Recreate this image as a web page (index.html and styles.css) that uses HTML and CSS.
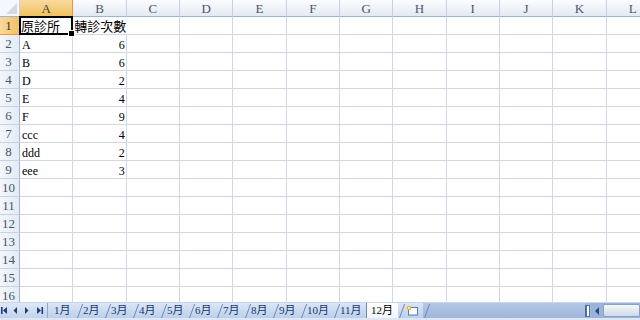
FILE: index.html
```html
<!DOCTYPE html>
<html lang="zh-Hant">

<head>
   <meta charset="utf-8" />
   <title>轉診次數 - 12月</title>
   <link rel="stylesheet" href="styles.css">
</head>

<body>
   <div class="sheet">
      <table class="grid">
         <colgroup>
            <col class="col-head">
            <col span="12" class="col-cell">
         </colgroup>
         <thead>
            <tr>
               <th class="corner"></th>
               <th class="sel">A</th>
               <th>B</th>
               <th>C</th>
               <th>D</th>
               <th>E</th>
               <th>F</th>
               <th>G</th>
               <th>H</th>
               <th>I</th>
               <th>J</th>
               <th>K</th>
               <th>L</th>
            </tr>
         </thead>
         <tbody>
            <tr>
               <th class="sel">1</th>
               <td class="active cjk">原診所</td>
               <td class="cjk" colspan="2">轉診次數</td>
               <td></td><td></td><td></td><td></td><td></td><td></td><td></td><td></td><td></td>
            </tr>
            <tr>
               <th>2</th><td>A</td><td class="num">6</td>
               <td></td><td></td><td></td><td></td><td></td><td></td><td></td><td></td><td></td><td></td>
            </tr>
            <tr>
               <th>3</th><td>B</td><td class="num">6</td>
               <td></td><td></td><td></td><td></td><td></td><td></td><td></td><td></td><td></td><td></td>
            </tr>
            <tr>
               <th>4</th><td>D</td><td class="num">2</td>
               <td></td><td></td><td></td><td></td><td></td><td></td><td></td><td></td><td></td><td></td>
            </tr>
            <tr>
               <th>5</th><td>E</td><td class="num">4</td>
               <td></td><td></td><td></td><td></td><td></td><td></td><td></td><td></td><td></td><td></td>
            </tr>
            <tr>
               <th>6</th><td>F</td><td class="num">9</td>
               <td></td><td></td><td></td><td></td><td></td><td></td><td></td><td></td><td></td><td></td>
            </tr>
            <tr>
               <th>7</th><td>ccc</td><td class="num">4</td>
               <td></td><td></td><td></td><td></td><td></td><td></td><td></td><td></td><td></td><td></td>
            </tr>
            <tr>
               <th>8</th><td>ddd</td><td class="num">2</td>
               <td></td><td></td><td></td><td></td><td></td><td></td><td></td><td></td><td></td><td></td>
            </tr>
            <tr>
               <th>9</th><td>eee</td><td class="num">3</td>
               <td></td><td></td><td></td><td></td><td></td><td></td><td></td><td></td><td></td><td></td>
            </tr>
            <tr>
               <th>10</th>
               <td></td><td></td><td></td><td></td><td></td><td></td><td></td><td></td><td></td><td></td><td></td><td></td>
            </tr>
            <tr>
               <th>11</th>
               <td></td><td></td><td></td><td></td><td></td><td></td><td></td><td></td><td></td><td></td><td></td><td></td>
            </tr>
            <tr>
               <th>12</th>
               <td></td><td></td><td></td><td></td><td></td><td></td><td></td><td></td><td></td><td></td><td></td><td></td>
            </tr>
            <tr>
               <th>13</th>
               <td></td><td></td><td></td><td></td><td></td><td></td><td></td><td></td><td></td><td></td><td></td><td></td>
            </tr>
            <tr>
               <th>14</th>
               <td></td><td></td><td></td><td></td><td></td><td></td><td></td><td></td><td></td><td></td><td></td><td></td>
            </tr>
            <tr>
               <th>15</th>
               <td></td><td></td><td></td><td></td><td></td><td></td><td></td><td></td><td></td><td></td><td></td><td></td>
            </tr>
            <tr>
               <th>16</th>
               <td></td><td></td><td></td><td></td><td></td><td></td><td></td><td></td><td></td><td></td><td></td><td></td>
            </tr>
         </tbody>
      </table>
   </div>

   <div class="tabbar">
      <div class="tabnav">
         <svg width="47" height="15" viewBox="0 0 47 15">
            <rect x="1" y="4" width="1.6" height="7" fill="#1d3f77" />
            <polygon points="7,4 7,11 3,7.5" fill="#1d3f77" />
            <polygon points="17,4 17,11 13.5,7.5" fill="#1d3f77" />
            <polygon points="25,4 25,11 28.5,7.5" fill="#1d3f77" />
            <polygon points="37,4 37,11 41,7.5" fill="#1d3f77" />
            <rect x="41.5" y="4" width="1.6" height="7" fill="#1d3f77" />
         </svg>
      </div>
      <div class="tabs">
         <span class="tab first">1月</span>
         <span class="tab">2月</span>
         <span class="tab">3月</span>
         <span class="tab">4月</span>
         <span class="tab">5月</span>
         <span class="tab">6月</span>
         <span class="tab">7月</span>
         <span class="tab">8月</span>
         <span class="tab">9月</span>
         <span class="tab">10月</span>
         <span class="tab">11月</span>
         <span class="tab current">12月</span>
         <span class="tab newsheet">
            <svg width="13" height="11" viewBox="0 0 13 11">
               <rect x="2.5" y="2.5" width="9" height="7.5" fill="#fff" stroke="#5a7bb0" />
               <circle cx="3" cy="3" r="2.3" fill="#f0b030" />
               <circle cx="3" cy="3" r="1" fill="#fff6c8" />
            </svg>
         </span>
      </div>
      <div class="tray"></div>
      <div class="splitter"></div>
      <div class="hscroll">
         <span class="arrow-left"></span>
         <span class="thumb"></span>
      </div>
   </div>
   <div class="status-edge"></div>
</body>

</html>
```

FILE: styles.css
```css
html {
   margin: 0;
   padding: 0;
}

body {
   margin: 0;
   width: 640px;
   height: 320px;
   overflow: hidden;
   background: #fff;
   font-family: "Liberation Serif", "Noto Sans CJK TC", serif;
}

* {
   box-sizing: border-box
}

.sheet {
   height: 302px;
   overflow: hidden;
}

.grid {
   table-layout: fixed;
   width: 660px;
   border-collapse: separate;
   border-spacing: 0;
   font-size: 12px;
   color: #000;
}

.col-head {
   width: 20px
}

.col-cell {
   width: 53.33px
}

.grid th {
   font-weight: normal;
   color: #4a5568;
   background: linear-gradient(#fbfcfe, #e3e9f3);
   border-right: 1px solid #c5d1e4;
   border-bottom: 1px solid #9eb6ce;
   padding: 0;
   text-align: center;
}

.grid thead th {
   height: 17px;
   line-height: 15px;
   font-size: 13px;
}

.grid tbody th {
   height: 18px;
   font-size: 13px;
   line-height: 16px;
   padding-right: 2px;
   background: linear-gradient(90deg, #f3f6fb, #e4ebf6);
   border-right: 1px solid #9eb6ce;
   border-bottom: 1px solid #c5d1e4;
}

.grid th.corner {
   position: relative;
   background: #f4f7fb;
}

.grid th.corner::after {
   content: "";
   position: absolute;
   right: 2px;
   bottom: 2px;
   border-style: solid;
   border-width: 0 0 11px 11px;
   border-color: transparent transparent #d4dae4 transparent;
}

.grid th.sel {
   color: #3b3b3b;
   background: linear-gradient(#f9d99f, #f1c15f);
   border-color: #f29536;
}

.grid tbody th.sel {
   background: linear-gradient(90deg, #f9d99f, #f1c15f);
}

.grid td {
   height: 18px;
   padding: 3px 2px 0 2px;
   line-height: 14px;
   vertical-align: bottom;
   white-space: nowrap;
   border-right: 1px solid #d0d7e5;
   border-bottom: 1px solid #d0d7e5;
}

.grid td.cjk {
   font-size: 13px;
   padding-left: 1px;
   padding-top: 2px;
}

.grid td.num {
   text-align: right;
   padding-right: 1px;
}

.grid td.active {
   position: relative;
}

.grid td.active::after {
   content: "";
   position: absolute;
   top: -1px;
   left: -1px;
   right: -1px;
   bottom: -1px;
   border: 2px solid #000;
}

.grid td.active::before {
   content: "";
   position: absolute;
   right: -3px;
   bottom: -3px;
   width: 5px;
   height: 5px;
   background: #000;
   border: 1px solid #fff;
   z-index: 1;
}

/* sheet tabs row */
.tabbar {
   display: flex;
   height: 16px;
   background: #a4bbdf;
   border-top: 1px solid #c7d6ec;
}

.tabnav {
   width: 48px;
   flex: none;
   display: flex;
   align-items: center;
   background: linear-gradient(#dfe8f6, #c2d3ec);
   border-right: 1px solid #8da6cc;
}

.tabs {
   display: flex;
   flex: none;
   background: linear-gradient(#dbe6f6, #bccfeb);
}

.tab {
   position: relative;
   flex: none;
   width: 28px;
   padding-left: 7px;
   font-size: 11px;
   line-height: 15px;
   color: #15396e;
   white-space: nowrap;
}

.tab::before {
   content: "";
   position: absolute;
   left: 1px;
   bottom: 0;
   height: 14px;
   border-left: 1px solid #6d89b6;
   transform-origin: bottom left;
   transform: skewX(-20deg);
}

.tab.first::before {
   display: none
}

.tab.first {
   padding-left: 6px
}

.tab:nth-child(10),
.tab:nth-child(11) {
   width: 33px;
}

.tab.current {
   width: 32px;
   padding-left: 4px;
   color: #000;
   background: linear-gradient(#ffffff, #f1f5fb);
   border-left: 1px solid #6d89b6;
}

.tab.current::before {
   display: none
}

.tab.newsheet {
   width: 25px;
   padding-left: 8px;
   padding-top: 2px;
}

.tray {
   position: relative;
   flex: 1;
   background: linear-gradient(#b3c7e6, #9fb6dc);
}

.tray::before {
   content: "";
   position: absolute;
   left: 1px;
   bottom: 0;
   height: 14px;
   border-left: 1px solid #6d89b6;
   transform-origin: bottom left;
   transform: skewX(-20deg);
}

.splitter {
   flex: none;
   width: 5px;
   margin: 2px 1px 1px 0;
   background: #fff;
   border: 1px solid #4f6f9f;
   border-left-width: 2px;
}

.hscroll {
   flex: none;
   width: 49px;
   display: flex;
   align-items: center;
   background: #9bb3da;
}

.arrow-left {
   width: 0;
   height: 0;
   margin: 0 4px 0 4px;
   border-style: solid;
   border-width: 4px 4px 4px 0;
   border-color: transparent #2c4a78 transparent transparent;
}

.thumb {
   flex: 1;
   align-self: stretch;
   margin: 1px 0;
   background: linear-gradient(#f6f8fb, #cfd9e8);
   border: 1px solid #8aa3c9;
   border-radius: 2px;
}

.status-edge {
   height: 3px;
   background: #dce6f4;
}
```
